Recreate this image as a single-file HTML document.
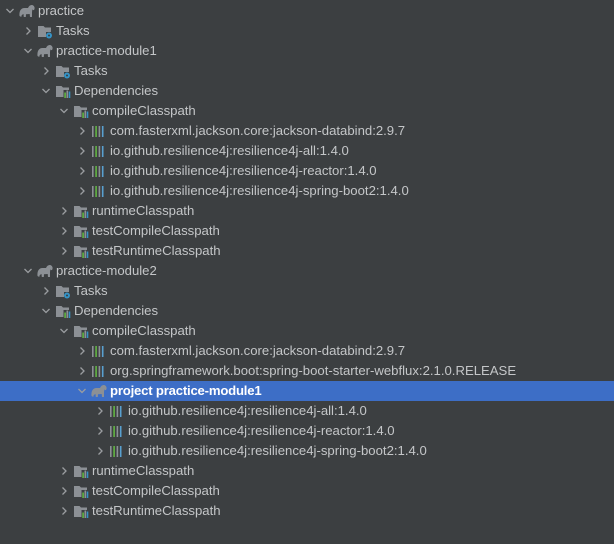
<!DOCTYPE html>
<html><head><meta charset="utf-8"><style>
body{margin:0;width:614px;height:544px;background:#3c3f41;overflow:hidden;font-family:"Liberation Sans",sans-serif;font-size:13.15px;color:#c4c6c8}
.r{position:absolute;left:0;width:614px;height:20px;line-height:20px;white-space:nowrap}
.r.sel{background:#3d6ec6;color:#fff;font-weight:bold;letter-spacing:-0.2px}
.a{position:absolute;top:5px;width:10px;height:10px}
.i{position:absolute;top:2px;width:16px;height:16px}
.t{position:absolute;top:0}
</style></head><body>
<div id="tree"></div>
<script>
var IC={
down:'<path d="M1.5 3 L5 6.5 L8.5 3" fill="none" stroke="#9a9da0" stroke-width="1.3"/>',
right:'<path d="M3.5 1.5 L7 5 L3.5 8.5" fill="none" stroke="#9a9da0" stroke-width="1.3"/>',
ele:'<path d="M0.5 13 C0 8 2 5 5.5 5 L9 5 C10 2.5 12 1.5 13.8 2.2 C15.5 3 16 5 15.3 6.5 C14.8 7.5 13.8 7.3 13.4 6.3 L13 9 L13 14 L11 14 L10.7 11 L7 11.3 L6.8 14 L4.8 14 L4.5 11 C3 11.5 2.3 12.5 2.3 14 Z" fill="#8c9095"/>',
tasks:'<path d="M1 3 H6.5 L8 4.5 H14 V9 H9 V14 H1 Z" fill="#8c9095"/><circle cx="12" cy="12.5" r="3" fill="#3592c4"/><circle cx="12" cy="12.5" r="1" fill="#3c3f41"/>',
deps:'<path d="M1 3 H6.5 L8 4.5 H14 V7 H8.5 V14 H1 Z" fill="#8c9095"/><rect x="9.3" y="9.5" width="1.6" height="5.5" fill="#62b543"/><rect x="11.5" y="7.5" width="1.6" height="7.5" fill="#8c9095"/><rect x="13.7" y="8.5" width="1.6" height="6.5" fill="#3592c4"/>',
lib:'<rect x="1" y="3" width="1.6" height="11" fill="#8c9095"/><rect x="4.3" y="3" width="1.6" height="11" fill="#62b543"/><rect x="7.6" y="3" width="1.6" height="11" fill="#8c9095"/><rect x="10.9" y="3" width="1.6" height="11" fill="#59a0d0"/>'
};
var rows=[
[0,'d','ele','practice'],
[1,'r','tasks','Tasks'],
[1,'d','ele','practice-module1'],
[2,'r','tasks','Tasks'],
[2,'d','deps','Dependencies'],
[3,'d','deps','compileClasspath'],
[4,'r','lib','com.fasterxml.jackson.core:jackson-databind:2.9.7'],
[4,'r','lib','io.github.resilience4j:resilience4j-all:1.4.0'],
[4,'r','lib','io.github.resilience4j:resilience4j-reactor:1.4.0'],
[4,'r','lib','io.github.resilience4j:resilience4j-spring-boot2:1.4.0'],
[3,'r','deps','runtimeClasspath'],
[3,'r','deps','testCompileClasspath'],
[3,'r','deps','testRuntimeClasspath'],
[1,'d','ele','practice-module2'],
[2,'r','tasks','Tasks'],
[2,'d','deps','Dependencies'],
[3,'d','deps','compileClasspath'],
[4,'r','lib','com.fasterxml.jackson.core:jackson-databind:2.9.7'],
[4,'r','lib','org.springframework.boot:spring-boot-starter-webflux:2.1.0.RELEASE'],
[4,'d','ele','project practice-module1',1],
[5,'r','lib','io.github.resilience4j:resilience4j-all:1.4.0'],
[5,'r','lib','io.github.resilience4j:resilience4j-reactor:1.4.0'],
[5,'r','lib','io.github.resilience4j:resilience4j-spring-boot2:1.4.0'],
[3,'r','deps','runtimeClasspath'],
[3,'r','deps','testCompileClasspath'],
[3,'r','deps','testRuntimeClasspath']
];
var h='';
rows.forEach(function(r,i){
 var x=r[0]*18, y=1+i*20;
 h+='<div class="r'+(r[4]?' sel':'')+'" style="top:'+y+'px">'+
 '<svg class="a" viewBox="0 0 10 10" style="left:'+(5+x)+'px">'+IC[r[1]=='d'?'down':'right']+'</svg>'+
 '<svg class="i" viewBox="0 0 16 16" style="left:'+(19+x)+'px">'+IC[r[2]]+'</svg>'+
 '<span class="t" style="left:'+(38+x)+'px">'+r[3]+'</span></div>';
});
document.getElementById('tree').innerHTML=h;
</script>
</body></html>
